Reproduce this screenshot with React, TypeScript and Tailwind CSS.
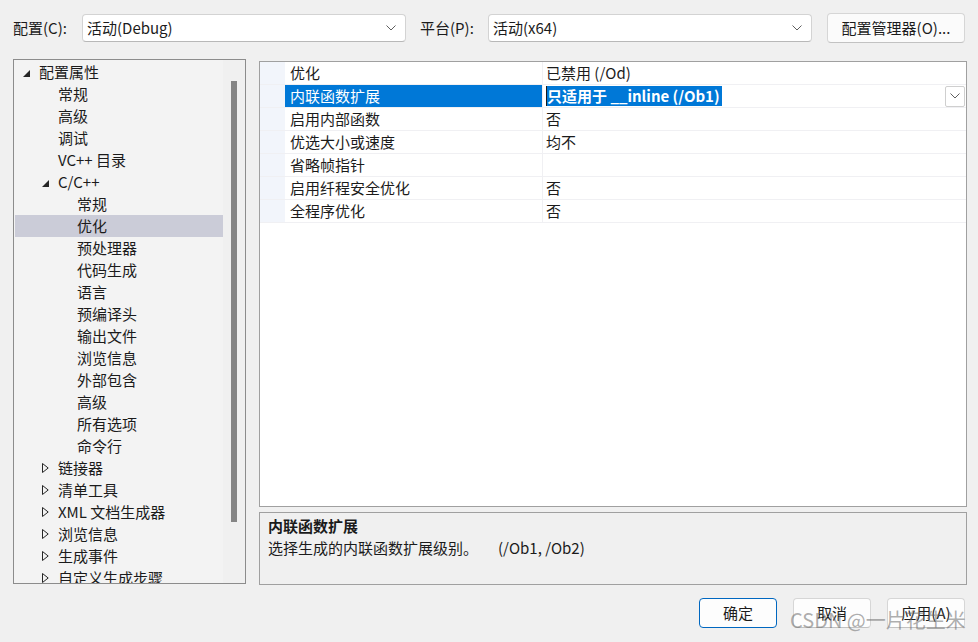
import React from 'react'

type TreeItem = {
  label: string
  level: 1 | 2 | 3
  toggle?: 'open' | 'closed'
  selected?: boolean
}

const tree: TreeItem[] = [
  { label: '配置属性', level: 1, toggle: 'open' },
  { label: '常规', level: 2 },
  { label: '高级', level: 2 },
  { label: '调试', level: 2 },
  { label: 'VC++ 目录', level: 2 },
  { label: 'C/C++', level: 2, toggle: 'open' },
  { label: '常规', level: 3 },
  { label: '优化', level: 3, selected: true },
  { label: '预处理器', level: 3 },
  { label: '代码生成', level: 3 },
  { label: '语言', level: 3 },
  { label: '预编译头', level: 3 },
  { label: '输出文件', level: 3 },
  { label: '浏览信息', level: 3 },
  { label: '外部包含', level: 3 },
  { label: '高级', level: 3 },
  { label: '所有选项', level: 3 },
  { label: '命令行', level: 3 },
  { label: '链接器', level: 2, toggle: 'closed' },
  { label: '清单工具', level: 2, toggle: 'closed' },
  { label: 'XML 文档生成器', level: 2, toggle: 'closed' },
  { label: '浏览信息', level: 2, toggle: 'closed' },
  { label: '生成事件', level: 2, toggle: 'closed' },
  { label: '自定义生成步骤', level: 2, toggle: 'closed' },
]

const indent = { 1: 'pl-[8px]', 2: 'pl-[27px]', 3: 'pl-[46px]' }

const props = [
  { name: '优化', value: '已禁用 (/Od)' },
  { name: '内联函数扩展', value: '只适用于 __inline (/Ob1)', selected: true },
  { name: '启用内部函数', value: '否' },
  { name: '优选大小或速度', value: '均不' },
  { name: '省略帧指针', value: '' },
  { name: '启用纤程安全优化', value: '否' },
  { name: '全程序优化', value: '否' },
]

function Chevron({ className = '' }: { className?: string }) {
  return (
    <svg width="10" height="6" viewBox="0 0 10 6" className={className}>
      <path d="M0.5 0.5 L5 5 L9.5 0.5" fill="none" stroke="#5f5f5f" strokeWidth="1" />
    </svg>
  )
}

function Toggle({ kind }: { kind?: 'open' | 'closed' }) {
  if (kind === 'open')
    return (
      <svg width="8" height="8" viewBox="0 0 8 8" className="mt-[3px]">
        <polygon points="7,0 7,7 0,7" fill="#262626" />
      </svg>
    )
  if (kind === 'closed')
    return (
      <svg width="7" height="10" viewBox="0 0 7 10">
        <polygon points="0.5,0.5 6.2,5 0.5,9.5" fill="none" stroke="#262626" strokeWidth="1" />
      </svg>
    )
  return null
}

function Combo({ text }: { text: string }) {
  return (
    <div className="flex items-center justify-between w-[324px] h-[28px] bg-white border border-[#d3d3d3] border-b-[#b8b8b8] rounded-[4px] pl-[4px] pr-[9px]">
      <span>{text}</span>
      <Chevron />
    </div>
  )
}

function DialogButton({ label, primary }: { label: string; primary?: boolean }) {
  return (
    <button
      className={
        primary
          ? 'w-[78px] h-[30px] rounded-[4px] bg-[#fdfdfd] border border-[#0067c0]'
          : 'w-[78px] h-[30px] rounded-[4px] bg-[#fdfdfd] border border-[#d6d6d6] border-b-[#c2c2c2]'
      }
    >
      {label}
    </button>
  )
}

export default function App() {
  return (
    <div className="relative w-[978px] h-[642px] overflow-hidden bg-[#f0f0f0] text-[15px] text-[#1b1b1b] font-['Noto_Sans_CJK_SC','Noto_Sans',sans-serif]">
      {/* top bar */}
      <div className="flex items-center h-[30px] mt-[13px] pl-[13px]">
        <span className="w-[69px]">配置(C):</span>
        <Combo text="活动(Debug)" />
        <span className="ml-[14px] w-[68px]">平台(P):</span>
        <Combo text="活动(x64)" />
        <button className="ml-[15px] w-[138px] h-[30px] rounded-[4px] bg-[#fbfbfb] border border-[#d6d6d6] border-b-[#c2c2c2]">
          配置管理器(O)...
        </button>
      </div>

      {/* main */}
      <div className="flex gap-[13px] mt-[16px] pl-[13px]">
        <div className="flex w-[233px] h-[525px] border border-[#8c8c8c] bg-[#f3f3f3] overflow-hidden">
          <div className="flex-1 p-[1px] pr-0">
            {tree.map((item, i) => (
              <div
                key={i}
                className={`flex items-center h-[22px] leading-[22px] whitespace-nowrap ${indent[item.level]} ${
                  item.selected ? 'bg-[#cbccd8]' : ''
                }`}
              >
                <span className="flex items-center w-[16px] h-[22px]">
                  <Toggle kind={item.toggle} />
                </span>
                <span>{item.label}</span>
              </div>
            ))}
          </div>
          <div className="w-[22px] bg-[#f0f0f0] pt-[21px] pl-[8px]">
            <div className="w-[6px] h-[441px] bg-[#858585]" />
          </div>
        </div>

        <div className="flex flex-col w-[708px]">
          <div className="mt-[2px] h-[446px] border border-[#a0a0a0] bg-white">
            {props.map((p, i) => (
              <div key={i} className="flex h-[23px] border-b border-[#f0f0f3]">
                <div className="w-[25px] bg-[#f2f5fb]" />
                <div
                  className={`flex items-center w-[258px] pl-[5px] border-r border-[#f0f0f3] ${
                    p.selected ? 'bg-[#0078d7] text-white' : ''
                  }`}
                >
                  {p.name}
                </div>
                <div className="flex flex-1 items-center justify-between pl-[3px] pr-[1px]">
                  {p.selected ? (
                    <>
                      <span className="bg-[#0078d7] text-white font-semibold leading-[20px] pr-[2px] border-l border-[#1b1b1b]">
                        {p.value}
                      </span>
                      <span className="flex items-center justify-center w-[20px] h-[21px] bg-white border border-[#cfcfcf] rounded-[2px]">
                        <Chevron />
                      </span>
                    </>
                  ) : (
                    <span>{p.value}</span>
                  )}
                </div>
              </div>
            ))}
          </div>

          <div className="mt-[5px] h-[73px] border border-[#a0a0a0] bg-[#f0f0f0] px-[8px] pt-[2px] leading-[22px]">
            <div className="font-bold">内联函数扩展</div>
            <div>
              选择生成的内联函数扩展级别。<span className="ml-[20px]">(/Ob1, /Ob2)</span>
            </div>
          </div>
        </div>
      </div>

      {/* dialog buttons */}
      <div className="flex justify-end gap-[16px] mt-[13px] pr-[13px]">
        <DialogButton label="确定" primary />
        <DialogButton label="取消" />
        <DialogButton label="应用(A)" />
      </div>

      {/* watermark */}
      <div className="absolute left-[790px] top-[605px] text-[20px] text-[rgba(105,105,105,0.55)] whitespace-nowrap pointer-events-none">
        CSDN @一片花生米
      </div>
    </div>
  )
}
